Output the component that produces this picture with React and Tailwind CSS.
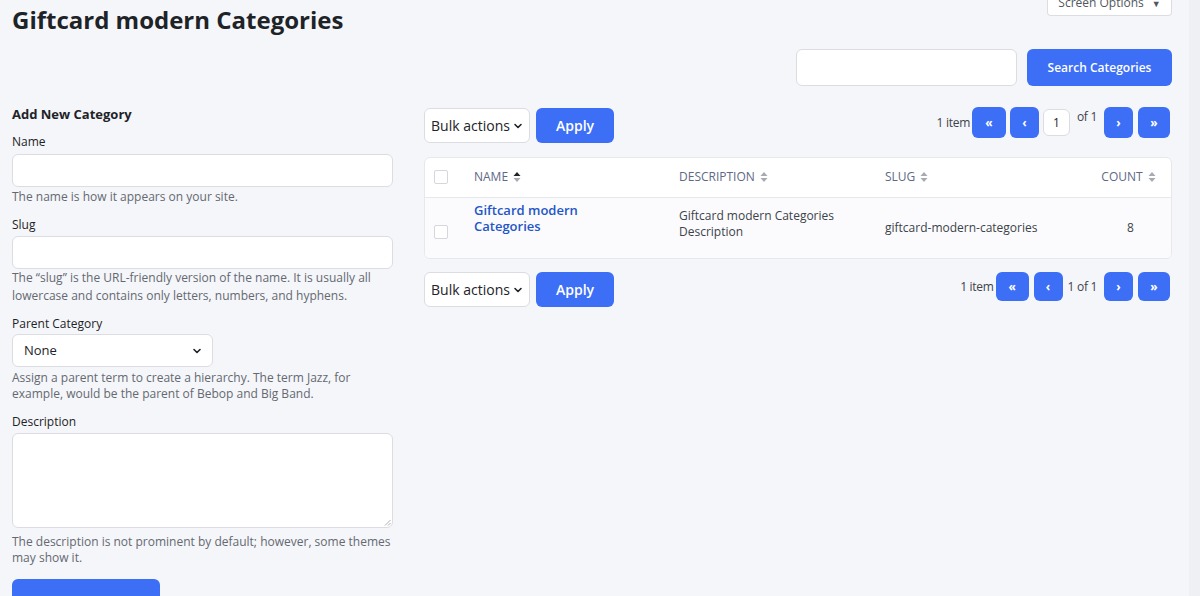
import React from "react";

const font = { fontFamily: '"Open Sans", "Liberation Sans", sans-serif' };

function SortIcon({ active }) {
  return (
    <svg width="8" height="12" viewBox="0 0 8 12" className="ml-[5px] inline-block">
      <path d="M4 1 L7.5 5 L0.5 5 Z" fill={active ? "#1d2327" : "#a7aab2"} />
      <path d="M4 11 L7.5 7 L0.5 7 Z" fill="#a7aab2" />
    </svg>
  );
}

function Chevron() {
  return (
    <svg width="10" height="10" viewBox="0 0 10 10" className="inline-block">
      <path d="M2 3.5 L5 6.5 L8 3.5" fill="none" stroke="#1d2327" strokeWidth="1.6" strokeLinecap="round" strokeLinejoin="round" />
    </svg>
  );
}

function PageBtn({ children, w, h, className = "" }) {
  return (
    <div
      className={`flex items-center justify-center rounded-[6px] bg-[#3c6ef6] text-[12px] font-bold text-white ${w} ${h} ${className}`}
    >
      {children}
    </div>
  );
}

function BulkBar({ top }) {
  const h = top ? "h-[31px]" : "h-[29px]";
  return (
    <div className="flex items-start justify-between">
      <div className="flex gap-[6px]">
        <div className="flex h-[35px] w-[106px] items-center justify-center gap-[3px] rounded-[6px] border border-[#dcdde3] bg-white text-[14px] text-[#1d2327]">
          Bulk actions <Chevron />
        </div>
        <div className="flex h-[35px] w-[78px] items-center justify-center rounded-[6px] bg-[#3c6ef6] text-[14px] font-semibold text-white">
          Apply
        </div>
      </div>
      {top ? (
        <div className="mt-[-1px] flex items-start whitespace-nowrap pr-[2px] text-[12px] text-[#3c434a]">
          <span className="mr-[2px] mt-[7px] tracking-[-0.3px]">1 item</span>
          <PageBtn w="w-[34px]" h={h}>«</PageBtn>
          <PageBtn w="w-[29px]" h={h} className="ml-[4px]">‹</PageBtn>
          <div className="ml-[4px] mt-[2px] flex h-[27px] w-[27px] items-center justify-center rounded-[6px] border border-[#dcdde3] bg-white text-[12px] text-[#1d2327]">
            1
          </div>
          <span className="ml-[7px] mt-[1px] tracking-[-0.3px]">of 1</span>
          <PageBtn w="w-[29px]" h={h} className="ml-[7px]">›</PageBtn>
          <PageBtn w="w-[32px]" h={h} className="ml-[5px]">»</PageBtn>
        </div>
      ) : (
        <div className="flex items-start whitespace-nowrap pr-[2px] text-[12px] text-[#3c434a]">
          <span className="mr-[2px] mt-[6px] tracking-[-0.3px]">1 item</span>
          <PageBtn w="w-[33px]" h={h}>«</PageBtn>
          <PageBtn w="w-[29px]" h={h} className="ml-[5px]">‹</PageBtn>
          <span className="ml-[5px] mt-[6px] tracking-[-0.3px]">1 of 1</span>
          <PageBtn w="w-[29px]" h={h} className="ml-[7px]">›</PageBtn>
          <PageBtn w="w-[32px]" h={h} className="ml-[5px]">»</PageBtn>
        </div>
      )}
    </div>
  );
}

export default function App() {
  return (
    <div className="relative h-[596px] w-[1200px] overflow-hidden bg-[#f5f6fa]" style={font}>
      <div className="absolute right-0 top-0 h-full w-[11px] bg-[#eff0f3]" />
      <div className="flex h-full w-[1189px] flex-col">
        {/* header */}
        <div className="flex items-start justify-between pl-[12px] pr-[17px]">
          <h1 className="mt-[3px] text-[24px] font-bold leading-[34px] text-[#1d2327]">
            Giftcard modern Categories
          </h1>
          <div className="flex h-[16px] w-[125px] items-start justify-center gap-[8px] overflow-hidden rounded-b-[4px] border border-t-0 border-[#dcdde3] bg-white text-[12px] text-[#50575e]">
            <span className="mt-[-4px] leading-[14px]">Screen Options</span>
            <span className="mt-[-3px] text-[9px] leading-[14px]">▼</span>
          </div>
        </div>
        <div className="mt-[12px] flex justify-end gap-[10px] pr-[17px]">
          <div className="h-[37px] w-[221px] rounded-[6px] border border-[#dcdde3] bg-white" />
          <div className="flex h-[37px] w-[145px] items-center justify-center rounded-[6px] bg-[#3c6ef6] text-[12px] font-semibold text-white">
            Search Categories
          </div>
        </div>

        <div className="mt-[22px] flex gap-[31px] pl-[12px] pr-[17px]">
          {/* left form */}
          <div className="w-[381px] shrink-0 text-[12px] text-[#1d2327]">
            <h2 className="mt-[-3px] text-[13px] font-bold leading-[18px]">Add New Category</h2>
            <div className="mt-[11px] leading-[16px]">Name</div>
            <div className="mt-[4px] h-[33px] rounded-[6px] border border-[#dcdde3] bg-white" />
            <p className="mt-[2px] leading-[16px] text-[#646970]">The name is how it appears on your site.</p>
            <div className="mt-[12px] leading-[16px]">Slug</div>
            <div className="mt-[3px] h-[33px] rounded-[6px] border border-[#dcdde3] bg-white" />
            <p className="mt-[0px] leading-[18px] text-[#646970]">
              The “slug” is the URL-friendly version of the name. It is usually all lowercase and contains only letters, numbers, and hyphens.
            </p>
            <div className="mt-[11px] leading-[16px]">Parent Category</div>
            <div className="mt-[2px] flex h-[33px] w-[201px] items-center justify-between rounded-[6px] border border-[#dcdde3] bg-white pl-[11px] pr-[10px] text-[13px]">
              None <Chevron />
            </div>
            <p className="mt-[3px] leading-[16px] text-[#646970]">
              Assign a parent term to create a hierarchy. The term Jazz, for example, would be the parent of Bebop and Big Band.
            </p>
            <div className="mt-[12px] leading-[16px]">Description</div>
            <div className="relative mt-[3px] h-[95px] rounded-[6px] border border-[#dcdde3] bg-white">
              <svg className="absolute bottom-[1px] right-[1px]" width="7" height="7" viewBox="0 0 7 7">
                <path d="M6.5 1 L1 6.5 M6.5 4 L4 6.5" stroke="#9a9a9a" strokeWidth="0.8" />
              </svg>
            </div>
            <p className="mt-[6px] leading-[16px] text-[#646970]">
              The description is not prominent by default; however, some themes may show it.
            </p>
            <div className="mt-[13px] h-[36px] w-[148px] rounded-[6px] bg-[#3c6ef6]" />
          </div>

          {/* right list */}
          <div className="flex-1">
            <BulkBar top />
            <div className="mt-[14px] overflow-hidden rounded-[6px] border border-[#e7e8ec] bg-white">
              <div className="flex h-[40px] items-center border-b border-[#e7e8ec] pb-[2px] text-[12px] font-medium uppercase text-[#5d6985]">
                <div className="flex w-[49px] justify-start pl-[9px]">
                  <div className="h-[14px] w-[14px] rounded-[2px] border border-[#d6d7dc] bg-white" />
                </div>
                <div className="flex w-[205px] items-center">Name<SortIcon active /></div>
                <div className="flex w-[206px] items-center">Description<SortIcon /></div>
                <div className="flex w-[215px] items-center">Slug<SortIcon /></div>
                <div className="flex flex-1 items-center justify-center pr-[14px]">Count<SortIcon /></div>
              </div>
              <div className="flex h-[60px] items-center bg-[#fbfbfd] text-[12px] text-[#3c434a]">
                <div className="flex w-[49px] justify-start self-end pb-[19px] pl-[9px]">
                  <div className="h-[14px] w-[14px] rounded-[2px] border border-[#d6d7dc] bg-white" />
                </div>
                <div className="w-[205px] self-start pt-[4px] text-[13px] font-semibold leading-[16px] text-[#2456c5]">
                  Giftcard modern<br />Categories
                </div>
                <div className="w-[206px] self-start pt-[10px] leading-[16px]">
                  Giftcard modern Categories<br />Description
                </div>
                <div className="w-[215px]">giftcard-modern-categories</div>
                <div className="flex-1 pr-[10px] text-center">8</div>
              </div>
            </div>
            <div className="mt-[13px]">
              <BulkBar />
            </div>
          </div>
        </div>
      </div>
    </div>
  );
}
